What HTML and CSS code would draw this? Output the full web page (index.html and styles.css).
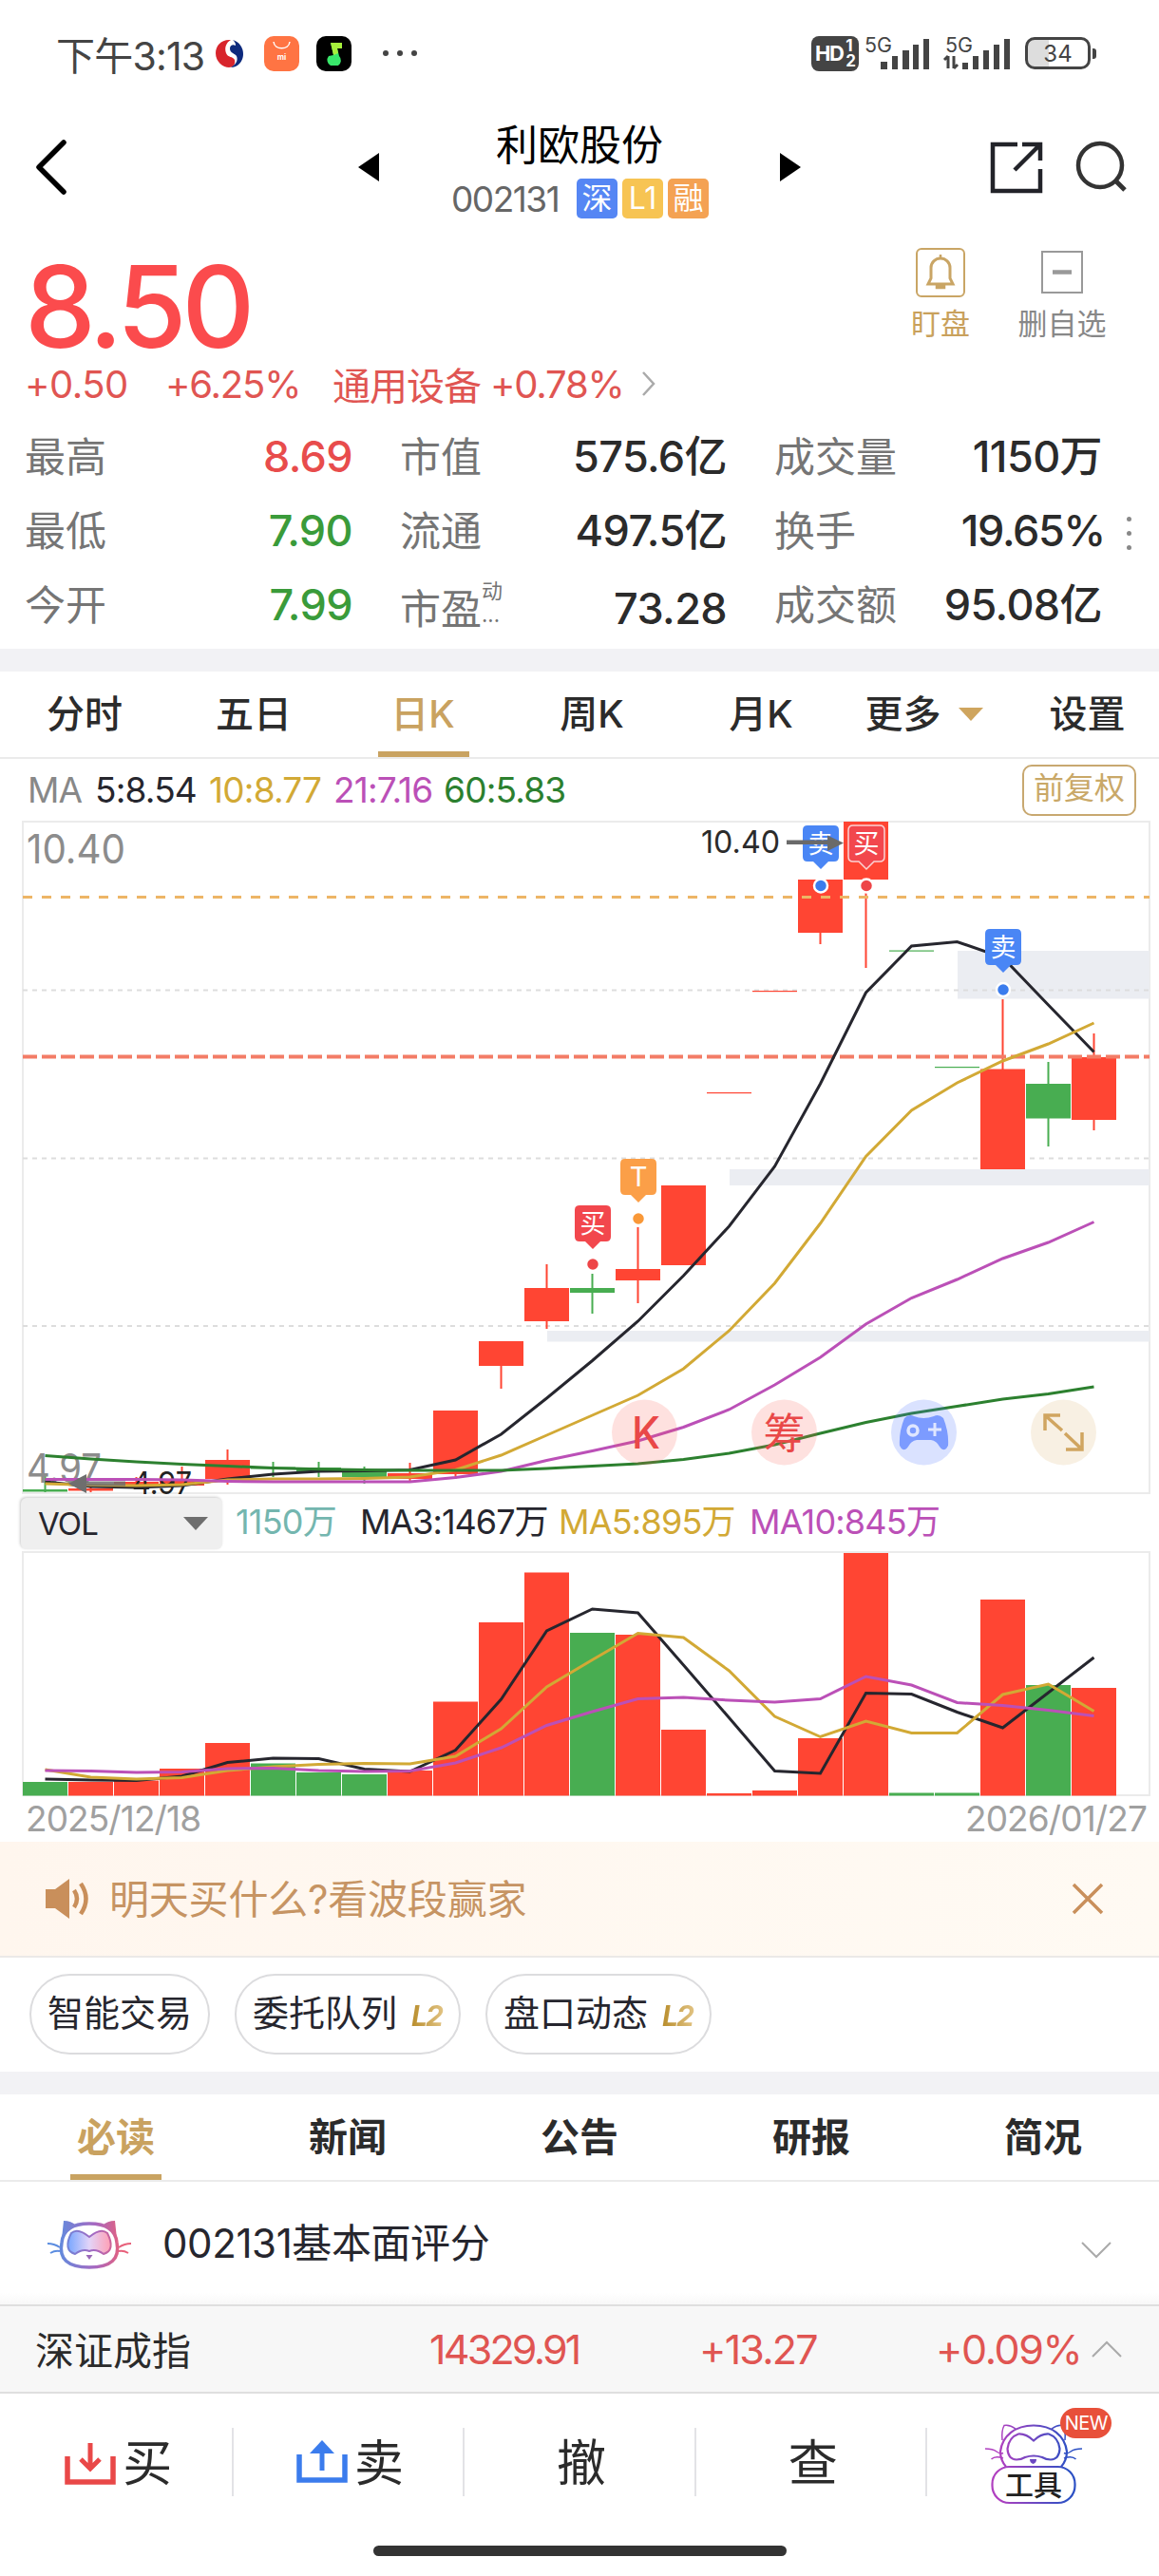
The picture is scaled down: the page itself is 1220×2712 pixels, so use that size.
FILE: index.html
```
<!DOCTYPE html>
<html lang="zh-CN">
<head>
    <meta charset="utf-8">
    <title>利欧股份 002131</title>
    <link rel="stylesheet" href="styles.css">
</head>
<body>
<div class="phone">
    <!-- 状态栏 -->
    <div class="status">
        <span class="time">下午3:13</span>
        <svg class="app" viewBox="0 0 37 37">
            <circle cx="18.500" cy="18.500" r="16" fill="#fff"/>
            <path d="M20 4C10 3 4 10 4 18c0 9 8 15 14 15 5 0 7-4 6-8-2-4-7-2-9-7-2-6 0-11 5-14z" fill="#d8252c"/>
            <path d="M22 4c7 2 11 8 11 15 0 8-6 14-13 14 5-3 8-7 6-12-2-3-7-3-7-8 0-3 3-5 6-3 0-3-1-4-3-6z" fill="#0d2a7d"/>
        </svg>
        <svg class="app" viewBox="0 0 37 37">
            <rect width="37" height="37" rx="10" fill="#ff7443"/>
            <path d="M10 6c1 9 16 9 17 0" fill="none" stroke="#fff" stroke-width="1.500"/>
            <text x="18.500" y="25" font-size="8" font-weight="700" fill="#fff" text-anchor="middle">mi</text>
        </svg>
        <svg class="app" viewBox="0 0 37 37">
            <rect width="37" height="37" rx="10" fill="#000"/>
            <path d="M15 7h12v6h-5l2 8a6.500 6.500 0 0 1-1 10h-8a6.500 6.500 0 0 1-2-10l5-1z" fill="#39e86b"/>
            <path d="M15 7h12v6h-5l1 5-5 2z" fill="#a6f03c"/>
        </svg>
        <span class="more"><i></i><i></i><i></i></span>
        <span class="hd"><b>HD</b><span><em>1</em><em>2</em></span></span>
        <svg class="signal" viewBox="0 0 70 37">
            <text x="0" y="17" font-size="21" textLength="29" lengthAdjust="spacingAndGlyphs">5G</text>
            <path d="M17 35v-8h7v8zM29 35V21h6v14zM40 35V15h7v20zM51 35V9h6v26zM62 35V3h6v32z"/>
        </svg>
        <svg class="signal signal2" viewBox="0 0 74 37">
            <text x="2" y="17" font-size="21" textLength="29" lengthAdjust="spacingAndGlyphs">5G</text>
            <path d="M5 21v13M1 25l4-4M11 21v13M15 30l-4 4" fill="none" stroke="#444" stroke-width="3"/>
            <path d="M20 35v-7h6v7zM31 35V21h6v14zM42 35V15h6v20zM53 35V9h6v26zM64 35V3h6v32z"/>
        </svg>
        <span class="battery">34</span><span class="nub"></span>
    </div>

    <!-- 标题 -->
    <div class="header">
        <svg class="back" viewBox="0 0 36 58"><path d="M31 3L5 29l26 26" fill="none" stroke="#000" stroke-width="5.500" stroke-linecap="round" stroke-linejoin="round"/></svg>
        <svg class="tri" viewBox="0 0 22 30"><path d="M22 0v30L0 15z"/></svg>
        <div class="title">
            <div class="name">利欧股份</div>
            <div class="code"><span>002131</span><i class="tag blue">深</i><i class="tag yellow">L1</i><i class="tag orange">融</i></div>
        </div>
        <svg class="tri" viewBox="0 0 22 30"><path d="M0 0v30l22-15z"/></svg>
        <svg class="share" viewBox="0 0 56 56"><path d="M29 4H3v49h50V30M34 4h19v17M52 5L26 31" fill="none" stroke="#222329" stroke-width="4.500"/></svg>
        <svg class="search" viewBox="0 0 56 56"><circle cx="26" cy="26" r="23" fill="none" stroke="#333" stroke-width="4.500"/><path d="M42 42l10 10" stroke="#333" stroke-width="5"/></svg>
    </div>

    <!-- 报价 -->
    <div class="quote">
        <div class="quote-top">
            <div class="quote-left">
                <div class="price">8.50</div>
                <div class="change">
                    <span class="c1">+0.50</span><span class="c2">+6.25%</span><span class="c3">通用设备</span><span class="c4">+0.78%</span>
                    <svg viewBox="0 0 16 28"><path d="M2 2l11 12L2 26" fill="none" stroke="#aaa" stroke-width="2.500"/></svg>
                </div>
            </div>
            <div class="actions">
                <div class="action gold">
                    <svg viewBox="0 0 52 52"><rect x="1" y="1" width="50" height="50" rx="5" fill="none" stroke="#c9a565" stroke-width="2"/><path d="M26 11a10 10 0 0 1 10 10v11l3 6H13l3-6V21a10 10 0 0 1 10-10z" fill="none" stroke="#c9a565" stroke-width="3"/><path d="M26 7v4M22 40h8v2h-8z" fill="#c9a565" stroke="#c9a565" stroke-width="2.500"/></svg>
                    <span>盯盘</span>
                </div>
                <div class="action">
                    <svg viewBox="0 0 52 52"><rect x="5" y="4" width="42" height="43" fill="none" stroke="#999" stroke-width="2"/><path d="M16 25.500h20" stroke="#999" stroke-width="4.500"/></svg>
                    <span>删自选</span>
                </div>
            </div>
        </div>
        <div class="stats">
            <div class="stat"><span>最高</span><b class="up">8.69</b></div>
            <div class="stat"><span>市值</span><b>575.6亿</b></div>
            <div class="stat"><span>成交量</span><b>1150万</b></div>
            <div class="dots"><i></i><i></i><i></i></div>
            <div class="stat"><span>最低</span><b class="down">7.90</b></div>
            <div class="stat"><span>流通</span><b>497.5亿</b></div>
            <div class="stat"><span>换手</span><b class="rate">19.65%</b></div>
            <div class="stat"><span>今开</span><b class="down">7.99</b></div>
            <div class="stat low"><span>市盈</span><small>动<br>...</small><b>73.28</b></div>
            <div class="stat"><span>成交额</span><b>95.08亿</b></div>
        </div>
    </div>

    <div class="band"></div>

    <div class="tabs period">
        <span>分时</span><span>五日</span><span class="on">日K</span><span>周K</span><span>月K</span>
        <span class="wide">更多<i class="caret"></i></span><span class="wide set">设置</span>
    </div>

    <div class="ma-row">
        <span class="m0">MA</span><span class="m1">5:8.54</span><span class="m2">10:8.77</span><span class="m3">21:7.16</span><span class="m4">60:5.83</span>
        <span class="fq">前复权</span>
    </div>

    <svg class="kline" id="kline" viewBox="0 864 1220 713"></svg>

    <div class="vol-row">
        <span class="select">VOL<i class="caret"></i></span>
        <span class="v0">1150万</span><span class="v1">MA3:1467万</span><span class="v2">MA5:895万</span><span class="v3">MA10:845万</span>
    </div>

    <svg class="volume" id="volume" viewBox="0 1633 1220 259"></svg>

    <div class="dates"><span>2025/12/18</span><span>2026/01/27</span></div>

    <div class="notice">
        <svg class="horn" viewBox="0 0 50 44"><path d="M1 12h10L26 1v42L11 32H1z" fill="#c98f5b"/><path d="M31 13q6 9 0 18M38 6q11 16 0 32" fill="none" stroke="#c98f5b" stroke-width="4.500"/></svg>
        <span>明天买什么?看波段赢家</span>
        <svg class="close" viewBox="0 0 32 32"><path d="M1 1l30 30M31 1L1 31" stroke="#c98f5b" stroke-width="3.500"/></svg>
    </div>

    <div class="chips">
        <span class="chip">智能交易</span>
        <span class="chip l2">委托队列<i>L2</i></span>
        <span class="chip l2">盘口动态<i>L2</i></span>
    </div>

    <div class="band"></div>

    <div class="tabs news">
        <span class="on">必读</span><span>新闻</span><span>公告</span><span>研报</span><span>简况</span>
    </div>

    <div class="score">
        <svg class="cat" viewBox="0 0 90 52">
            <defs><linearGradient id="g1" gradientUnits="userSpaceOnUse" x1="10" y1="0" x2="80" y2="0"><stop offset="0" stop-color="#5b8de0"/><stop offset=".6" stop-color="#a868c0"/><stop offset="1" stop-color="#e8607a"/></linearGradient>
            <linearGradient id="g2"><stop offset="0" stop-color="#78a6ff"/><stop offset=".5" stop-color="#e2d4f8"/><stop offset="1" stop-color="#ff9fb4"/></linearGradient></defs>
            <path d="M16 24Q18 4 45 4t29 20q5 26-29 26T16 24z" fill="#fff" stroke="url(#g1)" stroke-width="3.500"/>
            <path d="M16 20L18 1q8 0 13 5-11 5-15 14zM74 20L72 1q-8 0-13 5 11 5 15 14z" fill="url(#g1)"/>
            <path d="M45 18Q33 8 26 14q-9 18 4 22 8-6 15-3 7-3 15 3 13-4 4-22-7-6-19 4z" fill="url(#g2)" stroke="url(#g1)" stroke-width="2"/>
            <path d="M1 25q7 0 13 4M4 35q5-3 10-2M89 25q-7 0-13 4M86 35q-5-3-10-2" fill="none" stroke="url(#g1)" stroke-width="2"/>
            <path d="M41.500 37h7L45 42z" fill="#9a68b8"/>
        </svg>
        <span>002131基本面评分</span>
        <svg class="chev" viewBox="0 0 32 18"><path d="M1 1l15 15L31 1" fill="none" stroke="#aaa" stroke-width="2"/></svg>
    </div>

    <div class="index">
        <span class="iname">深证成指</span><span class="i1">14329.91</span><span class="i2">+13.27</span><span class="i3">+0.09%</span>
        <svg class="chev" viewBox="0 0 32 18"><path d="M1 17L16 2l15 15" fill="none" stroke="#aaa" stroke-width="2"/></svg>
    </div>

    <div class="toolbar">
        <div class="btn"><svg viewBox="0 0 54 48"><path d="M3 18v27h48V18" fill="none" stroke="#e94848" stroke-width="5.500"/><path d="M27 4v26M17 21l10 10 10-10" fill="none" stroke="#e94848" stroke-width="5"/></svg><span>买</span></div>
        <div class="btn"><svg viewBox="0 0 54 48"><path d="M3 16v27h48V16" fill="none" stroke="#3b7ced" stroke-width="5.500"/><path d="M27 33V6" stroke="#3b7ced" stroke-width="5"/><path d="M27 1l13 14H14z" fill="#3b7ced"/></svg><span>卖</span></div>
        <div class="btn"><span>撤</span></div>
        <div class="btn"><span>查</span></div>
        <div class="btn tools">
            <svg viewBox="0 0 102 86">
                <defs><linearGradient id="g3" gradientUnits="userSpaceOnUse" x1="15" y1="0" x2="88" y2="0"><stop offset="0" stop-color="#b040c0"/><stop offset="1" stop-color="#2c50c4"/></linearGradient></defs>
                <g fill="none" stroke="url(#g3)" stroke-width="1.500">
                    <path d="M18 18Q17 8 20 2.500q6-1 12 3.500M84 18q1-10-2-15.500-6-1-12 3.500"/>
                    <path d="M0 27q8 0 12 3t7 1.500M6.500 38q4-4 12.500-1M102 27q-8 0-12 3t-7 1.500M95.500 38q-4-4-12.500-1"/>
                </g>
                <g fill="none" stroke="url(#g3)" stroke-width="2.200">
                    <path d="M22 46q-6-7-6-16C18 13 32 2.500 51 2.500S84 13 86 30q0 9-6 16"/>
                    <path d="M51 18.500Q43 11 35 11.500 25 15 23.500 27 24 38 33 38.500q5 0 9-2.500 9-3 18 0 4 2.500 9 2.500 9-.5 9.500-11.500Q77 15 67 11.500 59 11 51 18.500z"/>
                    <rect x="7.500" y="46" width="87" height="38" rx="18" fill="#fff"/>
                </g>
                <path d="M47 38h7q0 4-3.500 5-3.500-1-3.500-5z" fill="#6b48c2"/>
                <text x="51" y="75.500" font-size="30" font-weight="500" text-anchor="middle" fill="#222">工具</text>
            </svg>
            <i class="new">NEW</i>
        </div>
    </div>
    <div class="home"></div>
</div>
<script src="script.js"></script>
</body>
</html>
```
FILE: styles.css
```
* {
    margin: 0;
    padding: 0;
    box-sizing: border-box;
}
body {
    background: #fff;
    font-family: Inter, "Noto Sans CJK SC", sans-serif;
    color: #2b2b2b;
}
i, em {
    font-style: normal;
}
svg {
    display: block;
    flex: none;
    overflow: visible;
}
span {
    white-space: nowrap;
}
.phone {
    width: 1220px;
    height: 2712px;
    overflow: hidden;
}

/* 状态栏 */
.status {
    display: flex;
    align-items: center;
    height: 112px;
    padding-left: 59px;
    color: #444;
}
.status > * {
    flex: none;
}
.time {
    width: 164px;
    font-size: 41px;
    letter-spacing: -0.800px;
}
.app {
    width: 37px;
    height: 37px;
    margin-right: 18px;
}
.more {
    display: flex;
    width: 466px;
    padding-left: 15px;
    gap: 9px;
}
.more i {
    width: 6px;
    height: 6px;
    border-radius: 50%;
    background: #444;
}
.hd {
    display: flex;
    align-items: center;
    width: 50px;
    height: 37px;
    padding-left: 4px;
    border-radius: 8px;
    background: #444;
    color: #fff;
    font-size: 22px;
    letter-spacing: -1.500px;
}
.hd em {
    display: block;
    font-size: 17px;
    line-height: 16px;
    font-weight: 700;
    padding-left: 3px;
}
.signal {
    width: 70px;
    height: 37px;
    margin-left: 6px;
    fill: #444;
}
.signal2 {
    width: 74px;
    margin-left: 13px;
}
.battery {
    width: 69px;
    height: 34px;
    margin-left: 12px;
    border: 3px solid #444;
    border-radius: 10px;
    background: linear-gradient(90deg, #ddd 35%, #fff 35%);
    font-size: 24px;
    line-height: 29px;
    text-align: center;
}
.nub {
    width: 4px;
    height: 11px;
    margin-left: 2px;
    border-radius: 0 3px 3px 0;
    background: #444;
}

/* 标题 */
.header {
    display: flex;
    align-items: center;
    height: 128px;
    padding-left: 36px;
}
.back {
    width: 36px;
    height: 58px;
    margin-right: 305px;
}
.tri {
    width: 22px;
    height: 30px;
}
.title {
    width: 422px;
    margin-top: 6px;
    text-align: center;
}
.name {
    height: 60px;
    font-size: 44px;
    line-height: 50px;
    color: #000;
}
.code {
    display: flex;
    align-items: center;
    height: 42px;
    padding-left: 76px;
}
.code span {
    width: 132px;
    font-size: 37px;
    text-align: left;
    letter-spacing: -1.500px;
    color: #666;
}
.tag {
    width: 43px;
    height: 42px;
    margin-right: 5px;
    border-radius: 5px;
    font-size: 32px;
    line-height: 41px;
    color: #fff;
}
.blue {
    background: #5586f4;
}
.yellow {
    background: #f7c453;
}
.orange {
    background: #f4a253;
}
.share {
    width: 56px;
    height: 56px;
    margin-left: 199px;
}
.search {
    width: 56px;
    height: 56px;
    margin-left: 34px;
}

/* 报价 */
.quote {
    height: 443px;
}
.quote-top {
    display: flex;
    justify-content: space-between;
    height: 202px;
    padding: 0 42px 0 26px;
}
.price {
    padding-top: 32px;
    font-size: 119px;
    line-height: 102px;
    font-weight: 500;
    letter-spacing: -5px;
    color: #fb4b4d;
}
.change {
    display: flex;
    align-items: center;
    height: 54px;
    margin-top: 3px;
    font-size: 40px;
    letter-spacing: -1.200px;
    color: #e05552;
}
.c1 {
    width: 148px;
    letter-spacing: -0.500px;
}
.c2 {
    width: 176px;
}
.c3 {
    width: 166px;
    letter-spacing: -1px;
}
.c4 {
    width: 159px;
}
.change svg {
    width: 16px;
    height: 28px;
}
.actions {
    display: flex;
    gap: 8px;
    padding-top: 21px;
}
.action {
    width: 120px;
    font-size: 31px;
    line-height: 55px;
    text-align: center;
    color: #888;
}
.action svg {
    width: 52px;
    height: 52px;
    margin: 0 auto;
}
.gold {
    color: #c9a15c;
}
.stats {
    display: grid;
    grid-template-columns: 345px 344px 345px 8px;
    grid-auto-rows: 78px;
    column-gap: 50px;
    padding-left: 26px;
    width: 1220px;
}
.stat {
    display: flex;
    align-items: center;
    line-height: 78px;
}
.stat span {
    font-size: 43px;
    color: #757575;
}
.stat b {
    margin-left: auto;
    font-size: 45px;
    font-weight: 500;
    letter-spacing: -0.600px;
}
.stat .up {
    color: #e84c4c;
}
.stat .down {
    color: #3a9b3a;
}
.stat .rate {
    margin-right: -3px;
    letter-spacing: -1.300px;
}
.low {
    padding-top: 8px;
}
.low small {
    font-size: 22px;
    line-height: 25px;
    color: #757575;
    margin-top: -12px;
}
.dots {
    display: flex;
    flex-direction: column;
    justify-content: center;
    align-items: center;
    gap: 10px;
    grid-row: 1 / 4;
    grid-column: 4;
    margin-left: -52px;
    padding-top: 4px;
}
.dots i {
    width: 5px;
    height: 5px;
    border-radius: 50%;
    background: #888;
}
.band {
    height: 24px;
    background: #f2f2f5;
}

/* 页签 */
.tabs {
    display: flex;
    height: 92px;
    border-bottom: 2px solid #ebebeb;
    font-size: 40px;
    line-height: 88px;
    font-weight: 500;
}
.tabs span {
    display: flex;
    justify-content: center;
    align-items: center;
}
.tabs .on {
    color: #c9a260;
}
.tabs .on::after {
    content: "";
    align-self: flex-end;
    width: 96px;
    height: 6px;
    margin-left: -96px;
    background: #c9a361;
}
.period span {
    width: 178px;
}
.period .on::after {
    margin-left: -81px;
    margin-right: -15px;
}
.period .wide {
    width: 165px;
}
.period .set {
    padding-left: 14px;
}
.period .caret {
    margin-left: 18px;
}
.caret {
    border: 13px solid transparent;
    border-top: 14px solid #cfa55e;
    border-bottom: 0;
}
.news span {
    width: 244px;
    font-size: 41px;
    font-weight: 700;
}
.news .on::after {
    margin-left: -89px;
    margin-right: -7px;
}

/* 均线 */
.ma-row, .vol-row {
    display: flex;
    align-items: center;
    font-size: 37px;
    letter-spacing: -0.800px;
    color: #26262e;
}
.ma-row {
    height: 65px;
    padding-left: 29px;
}
.m0 {
    width: 71px;
    color: #888;
}
.m1 {
    width: 120px;
}
.m2, .v2 {
    color: #d2a935;
}
.m2 {
    width: 131px;
}
.m3, .v3 {
    color: #bb50b7;
}
.m3 {
    width: 116px;
}
.m4 {
    width: 609px;
    color: #2c802f;
}
.fq {
    width: 120px;
    height: 54px;
    border: 2px solid #c8a870;
    border-radius: 10px;
    font-size: 32px;
    line-height: 46px;
    letter-spacing: 0;
    text-align: center;
    color: #c9a868;
}
.kline {
    width: 1220px;
    height: 713px;
}
.vol-row {
    align-items: flex-start;
    height: 56px;
    padding-left: 22px;
    font-size: 36px;
    line-height: 50px;
}
.select {
    display: flex;
    align-items: center;
    justify-content: space-between;
    width: 212px;
    height: 54px;
    margin-right: 14px;
    padding: 0 15px 0 18px;
    border-radius: 6px;
    background: #efefef;
    box-shadow: -1px -1px 3px #ccc;
    font-size: 33px;
}
.select .caret {
    border-top-color: #6e6e6e;
}
.v0 {
    width: 131px;
    color: #74b6af;
}
.v1 {
    width: 209px;
    letter-spacing: -1px;
}
.v2 {
    width: 201px;
}
.volume {
    width: 1220px;
    height: 259px;
}
.dates {
    display: flex;
    justify-content: space-between;
    height: 47px;
    padding: 0 13px 0 27px;
    font-size: 37px;
    line-height: 45px;
    letter-spacing: -0.900px;
    color: #a0a0a0;
}

/* 公告条 */
.notice {
    display: flex;
    align-items: center;
    height: 122px;
    padding: 0 59px 0 47px;
    border-bottom: 2px solid #ebe9e7;
    background: linear-gradient(90deg, #fff6ee, #fffaf3);
    font-size: 42px;
    color: #c69463;
}
.notice span {
    padding: 0 0 5px 18px;
    letter-spacing: -0.200px;
}
.horn {
    width: 50px;
    height: 44px;
}
.close {
    width: 32px;
    height: 32px;
    margin-left: auto;
}
.chips {
    display: flex;
    gap: 26px;
    height: 120px;
    padding: 17px 0 0 31px;
}
.chip {
    width: 190px;
    height: 85px;
    border: 2px solid #dcdcde;
    border-radius: 43px;
    padding-left: 17px;
    font-size: 38px;
    line-height: 78px;
    color: #26262e;
}
.chip.l2 {
    width: 238px;
}
.chip i {
    margin-left: 15px;
    font-size: 30px;
    font-weight: 700;
    font-style: italic;
    letter-spacing: -2px;
    color: transparent;
    background: linear-gradient(90deg, #b88d2c, #e3c586);
    -webkit-background-clip: text;
    background-clip: text;
    padding-right: 3px;
}

/* 评分与指数 */
.score {
    display: flex;
    align-items: center;
    height: 129px;
    padding: 0 50px 2px 49px;
    font-size: 42px;
    color: #26262e;
    background: linear-gradient(#fff 90%, #f8f8f8);
}
.score span {
    padding: 0 0 4px 32px;
    letter-spacing: -0.400px;
}
.cat {
    width: 90px;
    height: 52px;
    margin-top: 4px;
}
.chev {
    width: 32px;
    height: 18px;
}
.score .chev {
    margin: 16px 0 0 auto;
}
.index {
    display: flex;
    align-items: center;
    height: 94px;
    padding-left: 37px;
    border-top: 2px solid #dfdfdf;
    border-bottom: 2px solid #dfdfdf;
    background: #f7f7f7;
    font-size: 43px;
    letter-spacing: -2.800px;
    color: #e05552;
}
.iname {
    width: 415px;
    padding-bottom: 3px;
    font-size: 41px;
    letter-spacing: 0;
    color: #2b2b2b;
}
.i1 {
    width: 284px;
}
.i2 {
    width: 249px;
    letter-spacing: -1.800px;
}
.i3 {
    width: 164px;
    letter-spacing: -1.400px;
}

/* 底部工具栏 */
.toolbar {
    display: flex;
    height: 160px;
    padding: 36px 0 0 2px;
}
.btn {
    display: flex;
    justify-content: center;
    align-items: center;
    gap: 7px;
    width: 244px;
    height: 72px;
    padding-left: 4px;
    border-right: 2px solid #e3e3e6;
    font-size: 52px;
}
.btn span {
    margin-top: -6px;
}
.btn svg {
    width: 54px;
    height: 48px;
}
.btn.tools {
    position: relative;
    border: 0;
    padding: 0;
}
.btn.tools svg {
    width: 102px;
    height: 86px;
    margin: 4px 20px 0 0;
}
.new {
    position: absolute;
    left: 140px;
    top: -21px;
    width: 54px;
    height: 32px;
    border-radius: 16px;
    background: #e8503a;
    font-size: 20px;
    line-height: 32px;
    text-align: center;
    letter-spacing: -0.500px;
    color: #fff;
}
.home {
    width: 435px;
    height: 11px;
    margin: 0 auto;
    border-radius: 6px;
    background: #333;
}
```
FILE: script.js
```
var RED = '#ff4533', GREEN = '#48ad51';
var LEFT = 24, STEP = 48, BAR = 47;

// [涨跌, 实体上沿, 实体下沿, 最高, 最低]
var candles = [
    [0, 1568, 1570.5, 1552, 1571], [1, 1567, 1569.5, 1563, 1571], [1, 1560, 1564, 1555, 1566],
    [1, 1558.5, 1564, 1544, 1564], [1, 1537, 1557, 1526, 1563], [0, 1544.5, 1546.5, 1539, 1555],
    [0, 1545, 1549, 1539, 1555], [0, 1547, 1555, 1544, 1562], [1, 1551, 1557, 1540, 1560],
    [1, 1485, 1552, 1485, 1557], [1, 1412, 1438, 1412, 1462], [1, 1356, 1391, 1331, 1399],
    [0, 1356, 1361, 1341, 1383], [1, 1336, 1348, 1292, 1372], [1, 1248, 1332, 1248, 1332],
    [1, 1150, 1151.2, 1150, 1151], [1, 1043, 1044.2, 1043, 1044], [1, 926, 982, 926, 994],
    [1, 865, 926, 865, 1019], [0, 1000.5, 1001.7, 1001, 1001], [0, 1123, 1124.2, 1123, 1124],
    [1, 1125.5, 1231, 1052, 1231], [0, 1141, 1177.5, 1118, 1207], [1, 1113, 1179, 1088, 1190]
];
var ma = [
    ['#26262e', [1560, 1565, 1566, 1564, 1557, 1552, 1549, 1548.5, 1547.5, 1537, 1510, 1472, 1432.5, 1391, 1343, 1291, 1228, 1141, 1045, 996, 991.5, 1008, 1058, 1107.5]],
    ['#d2a935', [1562, 1563.5, 1564, 1563, 1558, 1557, 1557, 1556.5, 1555, 1547.5, 1532, 1511, 1490, 1469, 1441, 1401, 1351, 1288, 1217.5, 1169, 1140, 1117, 1099, 1077]],
    ['#bb50b7', [1557.5, 1557.5, 1557.5, 1558, 1559.5, 1560, 1560, 1560, 1560, 1555.5, 1549, 1537.5, 1527.5, 1517, 1502.5, 1484, 1458, 1429, 1394, 1366.5, 1347, 1325, 1308, 1286.5]],
    ['#2c802f', [1532.5, 1536, 1539, 1541.5, 1543.5, 1545.5, 1546.7, 1547.5, 1548, 1548, 1548, 1546, 1543.5, 1541, 1536.5, 1530, 1521, 1509, 1497.5, 1488, 1480.5, 1473, 1467.5, 1460]]
];
var vols = [1876, 1876, 1874.5, 1862, 1835, 1856.5, 1866, 1868, 1864, 1791.5, 1708, 1655.5, 1719, 1721, 1821, 1888, 1885, 1830, 1635, 1887.5, 1887.5, 1684, 1774, 1777];
var volMa = [
    ['#26262e', [1873, 1874, 1874.5, 1870, 1855.5, 1851, 1851.5, 1862.5, 1865, 1842.5, 1789, 1717, 1694, 1698, 1753, 1808.5, 1864.5, 1867, 1782.5, 1783.5, 1802.5, 1819, 1782, 1745]],
    ['#d2a935', [1863, 1871, 1873, 1871.5, 1864, 1860, 1857.5, 1856.5, 1857, 1849, 1820, 1776, 1747.5, 1719.5, 1724, 1759, 1807, 1828.5, 1812, 1824.5, 1824.5, 1784, 1773, 1801.5]],
    ['#bb50b7', [1864, 1864.5, 1866, 1865.5, 1862, 1861.5, 1864, 1865, 1864.5, 1856, 1840, 1816.5, 1802, 1788.5, 1787, 1790, 1792, 1788.5, 1765, 1774, 1792.5, 1795.5, 1800.5, 1806.5]]
];

function rect(x, y, w, h, fill, extra) {
    return '<rect x="' + x + '" y="' + y + '" width="' + w + '" height="' + h + '" fill="' + fill + '" ' + (extra || '') + '/>';
}
function hline(y, color, w, dash) {
    return '<path d="M24 ' + y + 'H1210" stroke="' + color + '" stroke-width="' + w + '" stroke-dasharray="' + dash + '"/>';
}
function curves(list) {
    return list.map(function (l) {
        var pts = l[1].map(function (y, i) { return (LEFT + 23.5 + STEP * i) + ',' + y; });
        return '<polyline points="' + pts.join(' ') + '" fill="none" stroke="' + l[0] + '" stroke-width="3"/>';
    }).join('');
}
function text(x, y, size, w, fill, str) {
    return '<text x="' + x + '" y="' + y + '" font-size="' + size + '" textLength="' + w + '" lengthAdjust="spacingAndGlyphs" fill="' + fill + '">' + str + '</text>';
}
// 买卖点标记
function mark(x, y, color, str, edge) {
    return '<path d="M' + (x - 14) + ' ' + y + 'h28q5 0 5 5v28q0 5-5 5h-6l-8 8-8-8h-6q-5 0-5-5v-28q0-5 5-5z" fill="' + color + '" stroke="' + (edge || 'none') + '" stroke-width="1.5"/>' +
        '<text x="' + x + '" y="' + (y + 29) + '" font-size="' + (str == 'T' ? 29 : 27) + '" text-anchor="middle" fill="#fff">' + str + '</text>';
}
function dot(x, y, color) {
    return '<circle cx="' + x + '" cy="' + y + '" r="7" fill="' + color + '" stroke="#fff" stroke-width="2.5"/>';
}

var k = rect(24, 865, 1186, 707, 'none', 'stroke="#ebebeb" stroke-width="2"');
k += rect(1008, 1001, 202, 50.5, '#ebedf2') + rect(768, 1231, 442, 17, '#ebedf2') + rect(576, 1401, 634, 11.5, '#ebedf2');
k += hline(1042.5, '#ddd', 1.8, '5 5') + hline(1219.5, '#ddd', 1.8, '5 5') + hline(1396, '#ddd', 1.8, '5 5');
candles.forEach(function (c, i) {
    var x = LEFT + STEP * i, color = c[0] ? RED : GREEN;
    k += rect(x + 22.5, c[3], 2, c[4] - c[3], color) + rect(x, c[1], BAR, c[2] - c[1], color);
});
k += hline(944.5, '#edb566', 2.8, '10 10') + hline(1112.5, '#f37c66', 4, '15 5');
k += text(28, 909, 42, 104, '#8c8c8c', '10.40') + text(28, 1561, 42, 79, '#8c8c8c', '4.97');
k += text(139, 1573, 33, 63, '#222', '4.97');
k += curves(ma);
k += '<path d="M90 1559.500h42v5H90z" fill="#6e6e6e" opacity=".85"/><path d="M72 1562l19-10v20z" fill="#6e6e6e"/>';
k += mark(864, 869, '#4a86f5', '卖') + mark(912, 869, '#f2474d', '买', '#fbd3d3') + mark(1056, 978, '#4a86f5', '卖');
k += mark(672, 1220, '#fb9f48', 'T') + mark(624, 1269, '#f2474d', '买');
k += dot(864, 932.5, '#3b7ced') + dot(912, 932.5, '#ee4547') + dot(1056, 1042, '#3b7ced') + dot(672, 1283, '#f99838') + dot(624, 1331, '#ee4547');
k += text(738, 898, 33, 83, '#2b2b2b', '10.40');
k += '<path d="M828 884.500h43v-5l17 8-17 8.500v-7h-43z" fill="#6a6a6a"/>';

// 悬浮按钮
k += '<circle cx="678.500" cy="1508" r="34.500" fill="rgba(250,90,75,.18)"/><circle cx="825.500" cy="1508" r="34.500" fill="rgba(250,90,75,.18)"/>';
k += '<circle cx="972.500" cy="1508" r="34.500" fill="rgba(70,110,255,.2)"/><circle cx="1119.500" cy="1508" r="34.500" fill="rgba(215,170,100,.18)"/>';
k += text(665, 1525, 46, 30, '#e94848', 'K').replace('<text', '<text font-weight="500"');
k += '<text x="825.500" y="1525" font-size="44" text-anchor="middle" fill="#e94848">筹</text>';
k += '<path d="M952 1493q5-5 10-2 10 4 21 0 5-3 10 2 6 15 5 29-4 8-9 1-3-6-9-7h-15q-6 1-9 7-5 7-9-1-1-14 5-29z" fill="#7c9bff"/>';
k += '<circle cx="961" cy="1506" r="5" fill="none" stroke="#dfe6ff" stroke-width="3.500"/><path d="M984 1498v14M977 1505h14" stroke="#dfe6ff" stroke-width="3"/>';
k += '<path d="M1100 1506v-16h16M1100 1490l18 16M1139 1508v18h-17M1139 1526l-18-17" fill="none" stroke="#d0a560" stroke-width="3.500"/>';
document.getElementById('kline').innerHTML = k;

var v = rect(24, 1634, 1186, 256, 'none', 'stroke="#ebebeb" stroke-width="2"');
vols.forEach(function (y, i) {
    v += rect(LEFT + STEP * i, y, BAR, 1890.5 - y, candles[i][0] ? RED : GREEN);
});
document.getElementById('volume').innerHTML = v + curves(volMa);
```
